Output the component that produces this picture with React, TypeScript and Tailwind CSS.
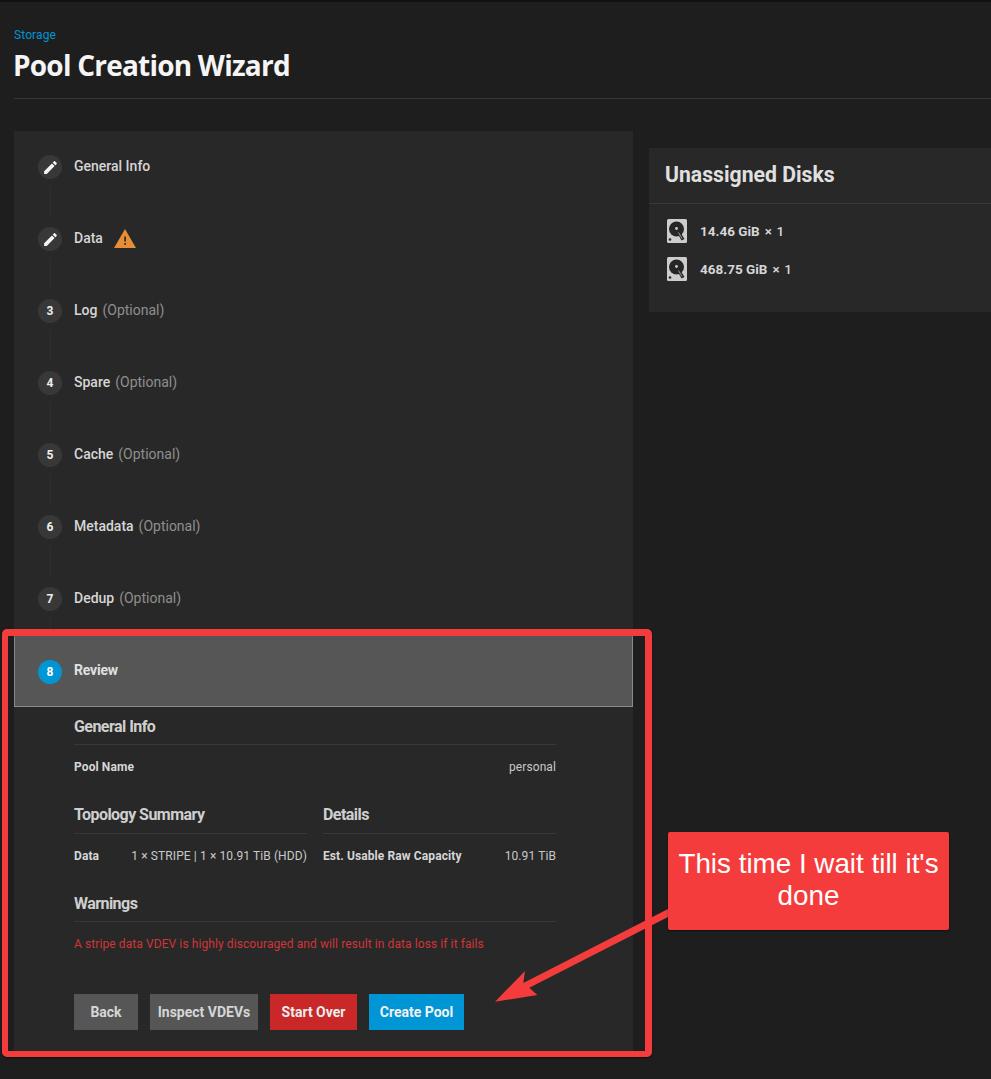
import React from "react";

const steps = [
  { n: "edit", label: "General Info" },
  { n: "edit", label: "Data", warn: true },
  { n: "3", label: "Log", opt: true },
  { n: "4", label: "Spare", opt: true },
  { n: "5", label: "Cache", opt: true },
  { n: "6", label: "Metadata", opt: true },
  { n: "7", label: "Dedup", opt: true },
];

function Pencil() {
  return (
    <svg viewBox="0 0 24 24" className="w-[17px] h-[17px]" fill="#f5f5f5">
      <path d="M3 17.25V21h3.75L17.81 9.94l-3.75-3.75L3 17.25zM20.71 7.04a1 1 0 0 0 0-1.41l-2.34-2.34a1 1 0 0 0-1.41 0l-1.83 1.83 3.75 3.75 1.83-1.83z" />
    </svg>
  );
}

function Warn() {
  return (
    <svg viewBox="0 0 22 19" className="w-[22px] h-[19px] ml-[11px] mb-[1px]">
      <path d="M11 0 L22 19 H0 Z" fill="#e68d36" />
      <rect x="10.2" y="7.5" width="1.8" height="5" fill="#3a3026" />
      <rect x="10.2" y="14" width="1.8" height="1.8" fill="#3a3026" />
    </svg>
  );
}

function Disk() {
  return (
    <svg viewBox="0 0 20 24" className="w-[20px] h-[24px] shrink-0">
      <rect x="0" y="0" width="20" height="24" rx="1.5" fill="#cdcdcd" />
      <circle cx="9.5" cy="10" r="7.5" fill="#262626" />
      <circle cx="9.5" cy="9.5" r="1.4" fill="#cdcdcd" />
      <path d="M9.5 12.5 L12 11 L17.5 20 L14.5 21.5 Z" fill="#262626" />
      <path d="M11.5 13.5 L15 19.5" stroke="#cdcdcd" strokeWidth="0.7" />
      <circle cx="3" cy="20.5" r="1.3" fill="#262626" />
    </svg>
  );
}

function Step({ n, label, warn, opt, last }: { n: string; label: string; warn?: boolean; opt?: boolean; last?: boolean }) {
  return (
    <div className="h-[72px] pl-[24px] flex flex-col">
      <div className="h-[72px] flex items-center relative">
        <div className="w-[24px] h-[24px] rounded-full bg-[#383838] flex items-center justify-center text-[12px] font-bold text-[#eeeeee] shrink-0">
          {n === "edit" ? <Pencil /> : n}
        </div>
        <span className="ml-[12px] mb-[2px] text-[14px] font-medium text-[#d6d6d6]">{label}</span>
        {opt && <span className="ml-[5px] mb-[2px] text-[14px] text-[#8f8f8f]">(Optional)</span>}
        {warn && <Warn />}
        {!last && <div className="absolute left-[12px] top-[55px] h-[32px] w-px bg-[#2e2e2e]" />}
      </div>
    </div>
  );
}

function Section({ title, className = "" }: { title: string; className?: string }) {
  return (
    <div className={`h-[38px] border-b border-[#383838] text-[16px] font-bold text-[#cfcfcf] leading-[40px] tracking-[-0.55px] ${className}`}>
      {title}
    </div>
  );
}

function Button({ label, cls }: { label: string; cls: string }) {
  return (
    <div className={`h-[36px] flex items-center justify-center text-[14px] font-bold ${cls}`}>{label}</div>
  );
}

export default function App() {
  return (
    <div className="relative w-[991px] h-[1079px] overflow-hidden bg-[#1e1e1e] text-[#d6d6d6] font-['Roboto',sans-serif]">
      <div className="h-[2px] bg-[#111111]" />
      <header className="ml-[14px] h-[97px] border-b border-[#383838] pt-[26px]">
        <div className="text-[12px] leading-[14px] text-[#0095d5] tracking-[0.1px]">Storage</div>
        <h1 className="mt-[3px] -ml-[1px] text-[28px] leading-[40px] font-bold text-[#f5f5f5] font-['Open_Sans',sans-serif] tracking-[-0.78px]">
          Pool Creation Wizard
        </h1>
      </header>

      <div className="flex items-start pl-[14px] pt-[32px]">
        <main className="w-[619px] h-[920px] bg-[#282828] shrink-0">
          {steps.map((s) => (
            <Step key={s.label} {...s} />
          ))}
          <div className="relative mt-[1px] h-[71px] border border-[#8a8a8a] border-t-[#555555] bg-[#565656] pl-[23px] flex items-center">
            <div className="w-[24px] h-[24px] rounded-full bg-[#0095d5] flex items-center justify-center text-[12px] font-bold text-white">8</div>
            <span className="ml-[12px] mb-[2px] text-[14px] font-bold text-[#e0e0e0] tracking-[-0.2px]">Review</span>
          </div>

          <div className="ml-[60px] w-[482px]">
            <Section title="General Info" />
            <div className="h-[44px] flex items-center justify-between text-[12px] tracking-[0.1px]">
              <span className="font-bold text-[#d6d6d6]">Pool Name</span>
              <span className="text-[#c8c8c8]">personal</span>
            </div>
            <div className="grid grid-cols-2 gap-x-[16px]">
              <div>
                <Section title="Topology Summary" className="mt-[6px] h-[39px]" />
                <div className="h-[44px] flex items-center justify-between text-[12px] tracking-[0.1px]">
                  <span className="font-bold">Data</span>
                  <span className="text-[#c8c8c8]">1 × STRIPE | 1 × 10.91 TiB (HDD)</span>
                </div>
              </div>
              <div>
                <Section title="Details" className="mt-[6px] h-[39px]" />
                <div className="h-[44px] flex items-center justify-between text-[12px] tracking-[0.1px]">
                  <span className="font-bold">Est. Usable Raw Capacity</span>
                  <span className="text-[#c8c8c8]">10.91 TiB</span>
                </div>
              </div>
            </div>
            <Section title="Warnings" className="mt-[6px]" />
            <div className="h-[44px] flex items-center text-[12px] text-[#d03636] tracking-[0.09px]">
              A stripe data VDEV is highly discouraged and will result in data loss if it fails
            </div>
            <div className="mt-[28px] flex gap-[12px]">
              <Button label="Back" cls="w-[64px] bg-[#565656] text-[#d6d6d6]" />
              <Button label="Inspect VDEVs" cls="w-[108px] bg-[#565656] text-[#d6d6d6]" />
              <Button label="Start Over" cls="w-[87px] bg-[#ca2828] text-[#eeeeee]" />
              <Button label="Create Pool" cls="w-[95px] bg-[#0095d5] text-[#f2f2f2]" />
            </div>
          </div>
        </main>

        <aside className="ml-[16px] mt-[17px] w-[342px] h-[164px] bg-[#282828] shrink-0">
          <div className="h-[56px] pl-[16px] pb-[2px] flex items-center border-b border-[#383838] text-[21.2px] font-bold text-[#e0e0e0]">
            Unassigned Disks
          </div>
          <div className="pl-[18px] pt-[15px] flex flex-col gap-[14px]">
            {["14.46 GiB", "468.75 GiB"].map((d) => (
              <div key={d} className="h-[24px] flex items-center text-[13.5px] font-bold text-[#d6d6d6]">
                <Disk />
                <span className="ml-[13px]">{d}</span>
                <span className="ml-[5px] font-medium tracking-[0.6px]">× 1</span>
              </div>
            ))}
          </div>
        </aside>
      </div>

      {/* annotation overlays */}
      <div className="absolute left-[2px] top-[629px] w-[650px] h-[428px] rounded-[5px] border-[6px] border-t-[7px] border-r-[7px] border-[#f43c3c] shadow-[0_1px_2px_rgba(0,0,0,0.5)]" />
      <svg className="absolute left-0 top-0 w-[991px] h-[1079px] pointer-events-none" viewBox="0 0 991 1079">
        <path d="M668 909 L523.3 983 L525 971 L495 1001.7 L537.3 995 L529.3 987.7 L668 917 Z" fill="#f43c3c" />
      </svg>
      <div className="absolute left-[668px] top-[832px] w-[281px] h-[98px] rounded-[2px] bg-[#f43c3c] shadow-[0_1px_2px_rgba(0,0,0,0.5)] pt-[16px] text-center text-[27.8px] leading-[32px] text-white font-['Liberation_Sans',sans-serif]">
        This time I wait till it's
        <br />
        done
      </div>
    </div>
  );
}
